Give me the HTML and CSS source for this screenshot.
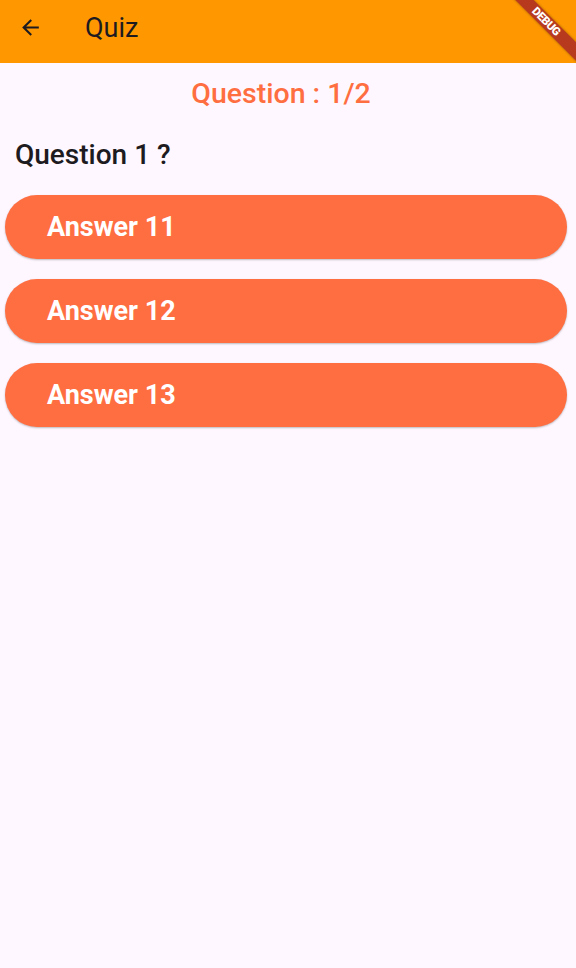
FILE: index.html
```html
<!DOCTYPE html>
<html>
<head>
<meta charset="utf-8">
<link rel="stylesheet" href="styles.css">
</head>
<body>
<div class="app">
  <header class="appbar">
    <svg class="back" width="24" height="24" viewBox="0 0 24 24"><path d="M20 11H7.83l5.59-5.59L12 4l-8 8 8 8 1.41-1.41L7.83 13H20v-2z" fill="#1d1b20"/></svg>
    <span class="title">Quiz</span>
  </header>
  <main class="content">
    <div class="counter">Question : 1/2</div>
    <div class="question">Question 1 ?</div>
    <div class="answers">
      <button class="answer">Answer 11</button>
      <button class="answer">Answer 12</button>
      <button class="answer">Answer 13</button>
    </div>
  </main>
  <div class="banner"><span>DEBUG</span></div>
</div>
</body>
</html>
```
FILE: styles.css
```css
* { box-sizing: border-box; }
html, body { margin: 0; padding: 0; }
body {
  width: 576px;
  height: 968px;
  overflow: hidden;
  font-family: Roboto, "Noto Sans", sans-serif;
  background: #fef7ff;
}
.app {
  position: relative;
  width: 576px;
  height: 968px;
  overflow: hidden;
  background: #fef7ff;
}
.appbar {
  height: 63px;
  background: #ff9800;
  display: flex;
  align-items: center;
  padding-left: 18px;
}
.back { display: block; width: 25px; height: 25px; margin-top: -8px; }
.title {
  margin-left: 42px;
  font-size: 27px;
  color: #1d1b20;
  margin-top: -8px;
}
.content {
  display: flex;
  flex-direction: column;
}
.counter {
  text-align: center;
  color: #ff6e40;
  font-size: 28.5px;
  font-weight: 500;
  line-height: 32px;
  margin-top: 15px;
  padding-right: 14px;
}
.question {
  font-size: 28px;
  font-weight: 500;
  color: #1d1b20;
  line-height: 32px;
  padding-left: 15px;
  margin-top: 29px;
}
.answers {
  display: flex;
  flex-direction: column;
  gap: 20px;
  padding: 0 9px 0 5px;
  margin-top: 24px;
}
.answer {
  height: 64px;
  border: none;
  border-radius: 32px;
  background: #ff6e40;
  color: #fff;
  font-family: Roboto, sans-serif;
  font-size: 27px;
  font-weight: 700;
  text-align: left;
  padding-left: 42px;
  box-shadow: 0 1px 2px rgba(0,0,0,0.25);
}
.banner {
  position: absolute;
  top: 0;
  right: 0;
  width: 80px;
  height: 80px;
  overflow: hidden;
}
.banner span {
  position: absolute;
  top: 15px;
  right: -30px;
  width: 120px;
  height: 13px;
  line-height: 13px;
  background: #b83a1e;
  color: #fff;
  font-size: 11.5px;
  font-weight: 900;
  text-align: center;
  transform: rotate(45deg);
  box-shadow: 0 0 3px rgba(0,0,0,0.35);
  letter-spacing: -0.4px;
}
```
